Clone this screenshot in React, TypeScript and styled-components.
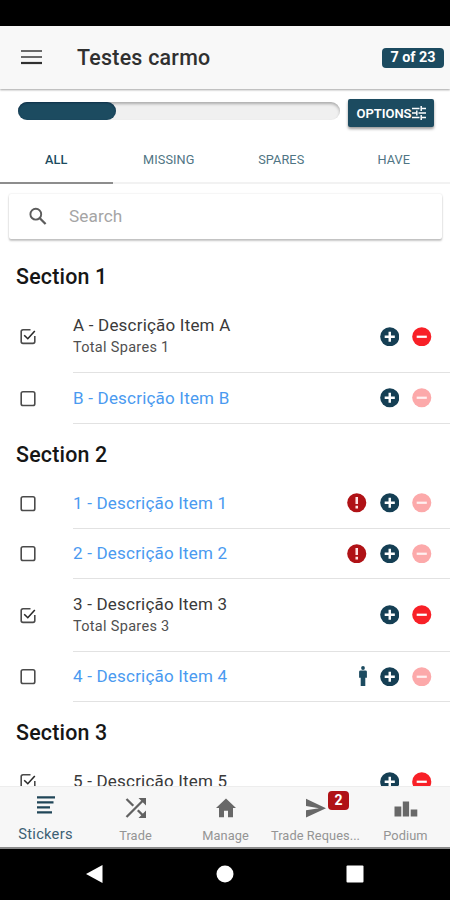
import React from 'react';
import styled, { createGlobalStyle } from 'styled-components';

const teal = '#1c4b60';

const GlobalStyle = createGlobalStyle`
  * { box-sizing: border-box; }
  body { margin: 0; background: #fff; font-family: Roboto, 'Liberation Sans', sans-serif; }
  button { font-family: inherit; border: 0; padding: 0; background: none; }
`;

const Screen = styled.div`
  width: 450px;
  height: 900px;
  display: flex;
  flex-direction: column;
  overflow: hidden;
  background: #fff;
`;

const StatusBar = styled.div`
  flex: none;
  height: 26px;
  background: #000;
`;

const Header = styled.header`
  flex: none;
  height: 63px;
  display: flex;
  align-items: center;
  padding: 0 6px 0 21px;
  background: #f8f8f8;
  box-shadow: 0 1px 2px rgba(0, 0, 0, 0.36);
`;

const MenuButton = styled.button`
  display: flex;
  width: 21px;
  height: 16px;
  margin-bottom: 2px;
`;

const Title = styled.h1`
  flex: 1;
  margin: 0 0 0 35px;
  font-size: 21.4px;
  line-height: 28px;
  font-weight: 500;
  letter-spacing: 0.25px;
  color: #303030;
`;

const Counter = styled.span`
  width: 62px;
  height: 20px;
  border-radius: 4px;
  background: ${teal};
  color: #fff;
  font-size: 14.4px;
  line-height: 20px;
  font-weight: 700;
  text-align: center;
`;

const ProgressRow = styled.div`
  flex: none;
  height: 47px;
  display: flex;
  align-items: flex-start;
  padding: 10px 16px 0 18px;
`;

const Track = styled.div`
  width: 322px;
  height: 18px;
  margin: 3px 8px 0 0;
  border-radius: 9px;
  background: #f0f0f0;
  box-shadow: inset 0 2px 3px rgba(0, 0, 0, 0.28);
`;

const Fill = styled.div`
  width: 98px;
  height: 18px;
  border-radius: 9px;
  background: ${teal};
  box-shadow: inset 0 1px 2px rgba(0, 20, 50, 0.5);
`;

const OptionsButton = styled.button`
  width: 86px;
  height: 28px;
  display: flex;
  align-items: center;
  justify-content: center;
  border-radius: 2px;
  background: ${teal};
  color: #fff;
  font-size: 13px;
  font-weight: 600;
  box-shadow: 0 2px 3px rgba(0, 0, 0, 0.4);
`;

const Tabs = styled.nav`
  flex: none;
  display: grid;
  grid-template-columns: repeat(4, 1fr);
  height: 48px;
`;

const Tab = styled.button<{ $active?: boolean }>`
  border-bottom: 2px solid ${p => (p.$active ? '#8d8d8d' : '#f2f2f2')};
  color: ${p => (p.$active ? '#1c4b60' : '#4f7584')};
  font-size: 12.7px;
  letter-spacing: 0.1px;
  font-weight: ${p => (p.$active ? 500 : 400)};
`;

const SearchBox = styled.label`
  flex: none;
  height: 45px;
  margin: 10px 8px 0 9px;
  display: flex;
  align-items: center;
  padding-left: 20px;
  border-radius: 2px;
  background: #fff;
  box-shadow: 0 2px 2px rgba(0, 0, 0, 0.22), 0 0 2px rgba(0, 0, 0, 0.14);
`;

const SearchInput = styled.input`
  margin: 0 0 1px 20px;
  padding: 0;
  width: 300px;
  border: 0;
  outline: 0;
  background: none;
  font: 400 17.2px Roboto, sans-serif;
  letter-spacing: 0.1px;
  &::placeholder { color: #a5a5a5; }
`;

const List = styled.main`
  flex: 1;
  min-height: 0;
  overflow: hidden;
  padding-top: 7px;
`;

const SectionTitle = styled.h2`
  height: 54.5px;
  margin: 0;
  padding: 6px 16px 0;
  font-size: 21.4px;
  line-height: 50px;
  font-weight: 500;
  letter-spacing: 0.2px;
  color: #161616;
`;

const Item = styled.div<{ $tall: boolean }>`
  height: ${p => (p.$tall ? 72.5 : 50.5)}px;
  display: flex;
  align-items: center;
  padding-left: 20px;
`;

const ItemBody = styled.div`
  flex: 1;
  align-self: stretch;
  margin-left: 37px;
  padding-right: 18.5px;
  display: flex;
  align-items: center;
  border-bottom: 1.5px solid #e2e2e2;
`;

const ItemText = styled.div`
  flex: 1;
`;

const Name = styled.div<{ $missing: boolean }>`
  font-size: 17px;
  line-height: 22px;
  letter-spacing: 0.2px;
  color: ${p => (p.$missing ? '#4a9af0' : '#3a3a3a')};
`;

const Spares = styled.div`
  font-size: 14.5px;
  line-height: 21px;
  margin-top: 1px;
  letter-spacing: 0.3px;
  color: #505050;
`;

const Actions = styled.div`
  display: flex;
  align-items: center;
  gap: 13px;
`;

const BottomTabs = styled.nav`
  flex: none;
  height: 63px;
  display: grid;
  grid-template-columns: repeat(5, 90px);
  background: #f7f7f7;
  border-top: 1px solid #ededed;
  border-bottom: 2px solid #8a8a8a;
`;

const BottomTab = styled.button<{ $active?: boolean }>`
  position: relative;
  display: flex;
  flex-direction: column;
  align-items: center;
  padding: ${p => (p.$active ? 8 : 9.5)}px 0 0 1px;
`;

const BottomLabel = styled.span<{ $active?: boolean }>`
  margin-top: ${p => (p.$active ? 10 : 8.5)}px;
  white-space: nowrap;
  font-size: ${p => (p.$active ? 14.7 : 12.8)}px;
  line-height: 18px;
  letter-spacing: ${p => (p.$active ? 0.25 : 0.08)}px;
  color: ${p => (p.$active ? '#3c6073' : '#949494')};
`;

const Badge = styled.span`
  position: absolute;
  left: 58px;
  top: 4px;
  width: 21px;
  height: 19px;
  border-radius: 4px;
  background: #b01216;
  color: #fff;
  font-size: 14px;
  line-height: 19px;
  font-weight: 700;
  text-align: center;
`;

const SystemNav = styled.div`
  flex: none;
  height: 51px;
  display: flex;
  align-items: center;
  justify-content: space-between;
  padding: 0 86px 2px 86px;
  background: #000;
`;

const MenuIcon = () => (
  <svg width="21" height="16" viewBox="0 0 21 16">
    <path d="M0 2h21M0 8h21" stroke="#6a6a6a" strokeWidth="2.2" />
    <path d="M0 14h21" stroke="#303030" strokeWidth="2.2" />
  </svg>
);

const TuneIcon = () => (
  <svg width="14" height="14" viewBox="0 0 14 14" stroke="#fff" strokeWidth="1.5" fill="none">
    <path d="M0 2.5h7.5M10 2.5h4M0 7h4M6.5 7h7.5M0 11.5h7.5M10 11.5h4M9.2 0v5M4.8 4.5v5M9.2 9v5" />
  </svg>
);

const SearchIcon = () => (
  <svg width="20" height="20" viewBox="0 0 20 20" fill="none" stroke="#5c5c5c" strokeWidth="1.9">
    <circle cx="6.8" cy="7.2" r="5.4" />
    <path d="M10.8 11.2l5.8 5.8" strokeWidth="2.3" />
  </svg>
);

const Checkbox = ({ checked }: { checked: boolean }) => (
  <svg width="16" height="17" viewBox="0 0 16 17" fill="none" stroke="#4b4b4b" strokeWidth="1.6">
    {checked ? (
      <>
        <path d="M10.5 1.8H3A1.8 1.8 0 0 0 1.2 3.6v10A1.8 1.8 0 0 0 3 15.4h10a1.8 1.8 0 0 0 1.8-1.8V8" />
        <path d="M4.2 7.2l3.6 3.5L14.8 3" stroke="#292929" />
      </>
    ) : (
      <rect x="1.2" y="1.7" width="13.6" height="13.8" rx="1.8" />
    )}
  </svg>
);

const colours = { add: '#153f54', remove: '#f82027', faded: '#fca9aa', alert: '#b01216' };

const RoundIcon = ({ kind }: { kind: keyof typeof colours }) => (
  <svg width="19.5" height="19.5" viewBox="0 0 20 20">
    <circle cx="10" cy="10" r="9.8" fill={colours[kind]} />
    {kind === 'add' && <path d="M10 4.8v10.4M4.8 10h10.4" stroke="#fff" strokeWidth="2.5" />}
    {(kind === 'remove' || kind === 'faded') && (
      <path d="M4.8 10h10.4" stroke={kind === 'faded' ? '#fff0f0' : '#fff'} strokeWidth="2.3" />
    )}
    {kind === 'alert' && <path d="M10 4.2v7.1M10 13.2v2.6" stroke="#ffe5e5" strokeWidth="2.6" />}
  </svg>
);

const PersonIcon = () => (
  <svg width="8" height="20" viewBox="0 0 8 20" fill={teal}>
    <circle cx="4" cy="2" r="1.9" />
    <path d="M1.6 4.4h4.8A1.5 1.5 0 0 1 7.9 6v5.7H6.3v8.2H1.7v-8.2H.1V6a1.5 1.5 0 0 1 1.5-1.6z" />
  </svg>
);

const StickersIcon = () => (
  <svg width="18" height="20" viewBox="0 0 18 20" fill="none" stroke="#204658" strokeWidth="2.2">
    <path d="M0 2.3h18M0 7.3h16.5M0 12.3h13M0 17.3h15" />
  </svg>
);

const ShuffleIcon = () => (
  <svg width="22" height="22" viewBox="0 0 22 22" fill="none" stroke="#626262" strokeWidth="2.3">
    <path d="M1.5 20L18.5 3M1.5 2l6.8 6.7M12.8 13.2l6 6" />
    <path d="M13.5 1H21v7.5zM21 13.5V21h-7.5z" fill="#626262" stroke="none" />
  </svg>
);

const HomeIcon = () => (
  <svg width="22" height="22" viewBox="0 0 22 22" fill="#686868">
    <path d="M11 1.5L21 11h-3v9.3h-5v-6.5H9v6.5H4V11H1z" />
  </svg>
);

const SendIcon = () => (
  <svg width="22" height="22" viewBox="0 0 22 22" fill="#686868">
    <path d="M1 1.8L21 11.2 1 20.6v-7.3l13-2.1L1 9z" />
  </svg>
);

const PodiumIcon = () => (
  <svg width="24" height="22" viewBox="0 0 24 22" fill="#686868">
    <path d="M.5 9.5h6.8v10H.5zM8.8 4.5h6.3v15H8.8zM16.7 12.5h6.6v7h-6.6z" />
  </svg>
);

const sections: { title: string; items: { name: string; spares?: number; mark?: 'alert' | 'person' }[] }[] = [
  { title: 'Section 1', items: [{ name: 'A - Descrição Item A', spares: 1 }, { name: 'B - Descrição Item B' }] },
  {
    title: 'Section 2',
    items: [
      { name: '1 - Descrição Item 1', mark: 'alert' },
      { name: '2 - Descrição Item 2', mark: 'alert' },
      { name: '3 - Descrição Item 3', spares: 3 },
      { name: '4 - Descrição Item 4', mark: 'person' },
    ],
  },
  { title: 'Section 3', items: [{ name: '5 - Descrição Item 5', spares: 0 }] },
];

export default function App() {
  return (
    <Screen>
      <GlobalStyle />
      <StatusBar />
      <Header>
        <MenuButton aria-label="Menu"><MenuIcon /></MenuButton>
        <Title>Testes carmo</Title>
        <Counter>7 of 23</Counter>
      </Header>
      <ProgressRow>
        <Track><Fill /></Track>
        <OptionsButton>OPTIONS<TuneIcon /></OptionsButton>
      </ProgressRow>
      <Tabs>
        <Tab $active>ALL</Tab>
        <Tab>MISSING</Tab>
        <Tab>SPARES</Tab>
        <Tab>HAVE</Tab>
      </Tabs>
      <SearchBox>
        <SearchIcon />
        <SearchInput placeholder="Search" />
      </SearchBox>
      <List>
        {sections.map(section => (
          <section key={section.title}>
            <SectionTitle>{section.title}</SectionTitle>
            {section.items.map(item => {
              const owned = item.spares !== undefined;
              const tall = !!item.spares;
              return (
                <Item key={item.name} $tall={tall}>
                  <Checkbox checked={owned} />
                  <ItemBody>
                    <ItemText>
                      <Name $missing={!owned}>{item.name}</Name>
                      {tall && <Spares>Total Spares {item.spares}</Spares>}
                    </ItemText>
                    <Actions>
                      {item.mark === 'alert' && <RoundIcon kind="alert" />}
                      {item.mark === 'person' && <PersonIcon />}
                      <RoundIcon kind="add" />
                      <RoundIcon kind={owned ? 'remove' : 'faded'} />
                    </Actions>
                  </ItemBody>
                </Item>
              );
            })}
          </section>
        ))}
      </List>
      <BottomTabs>
        <BottomTab $active><StickersIcon /><BottomLabel $active>Stickers</BottomLabel></BottomTab>
        <BottomTab><ShuffleIcon /><BottomLabel>Trade</BottomLabel></BottomTab>
        <BottomTab><HomeIcon /><BottomLabel>Manage</BottomLabel></BottomTab>
        <BottomTab><SendIcon /><Badge>2</Badge><BottomLabel>Trade Reques...</BottomLabel></BottomTab>
        <BottomTab><PodiumIcon /><BottomLabel>Podium</BottomLabel></BottomTab>
      </BottomTabs>
      <SystemNav>
        <svg width="17" height="18" viewBox="0 0 17 18"><path d="M16.5 0v18L0 9z" fill="#fff" /></svg>
        <svg width="18" height="18" viewBox="0 0 18 18"><circle cx="9" cy="9" r="8.5" fill="#fff" /></svg>
        <svg width="18" height="18" viewBox="0 0 18 18"><rect x=".5" y=".5" width="17" height="17" rx="1" fill="#fff" /></svg>
      </SystemNav>
    </Screen>
  );
}
